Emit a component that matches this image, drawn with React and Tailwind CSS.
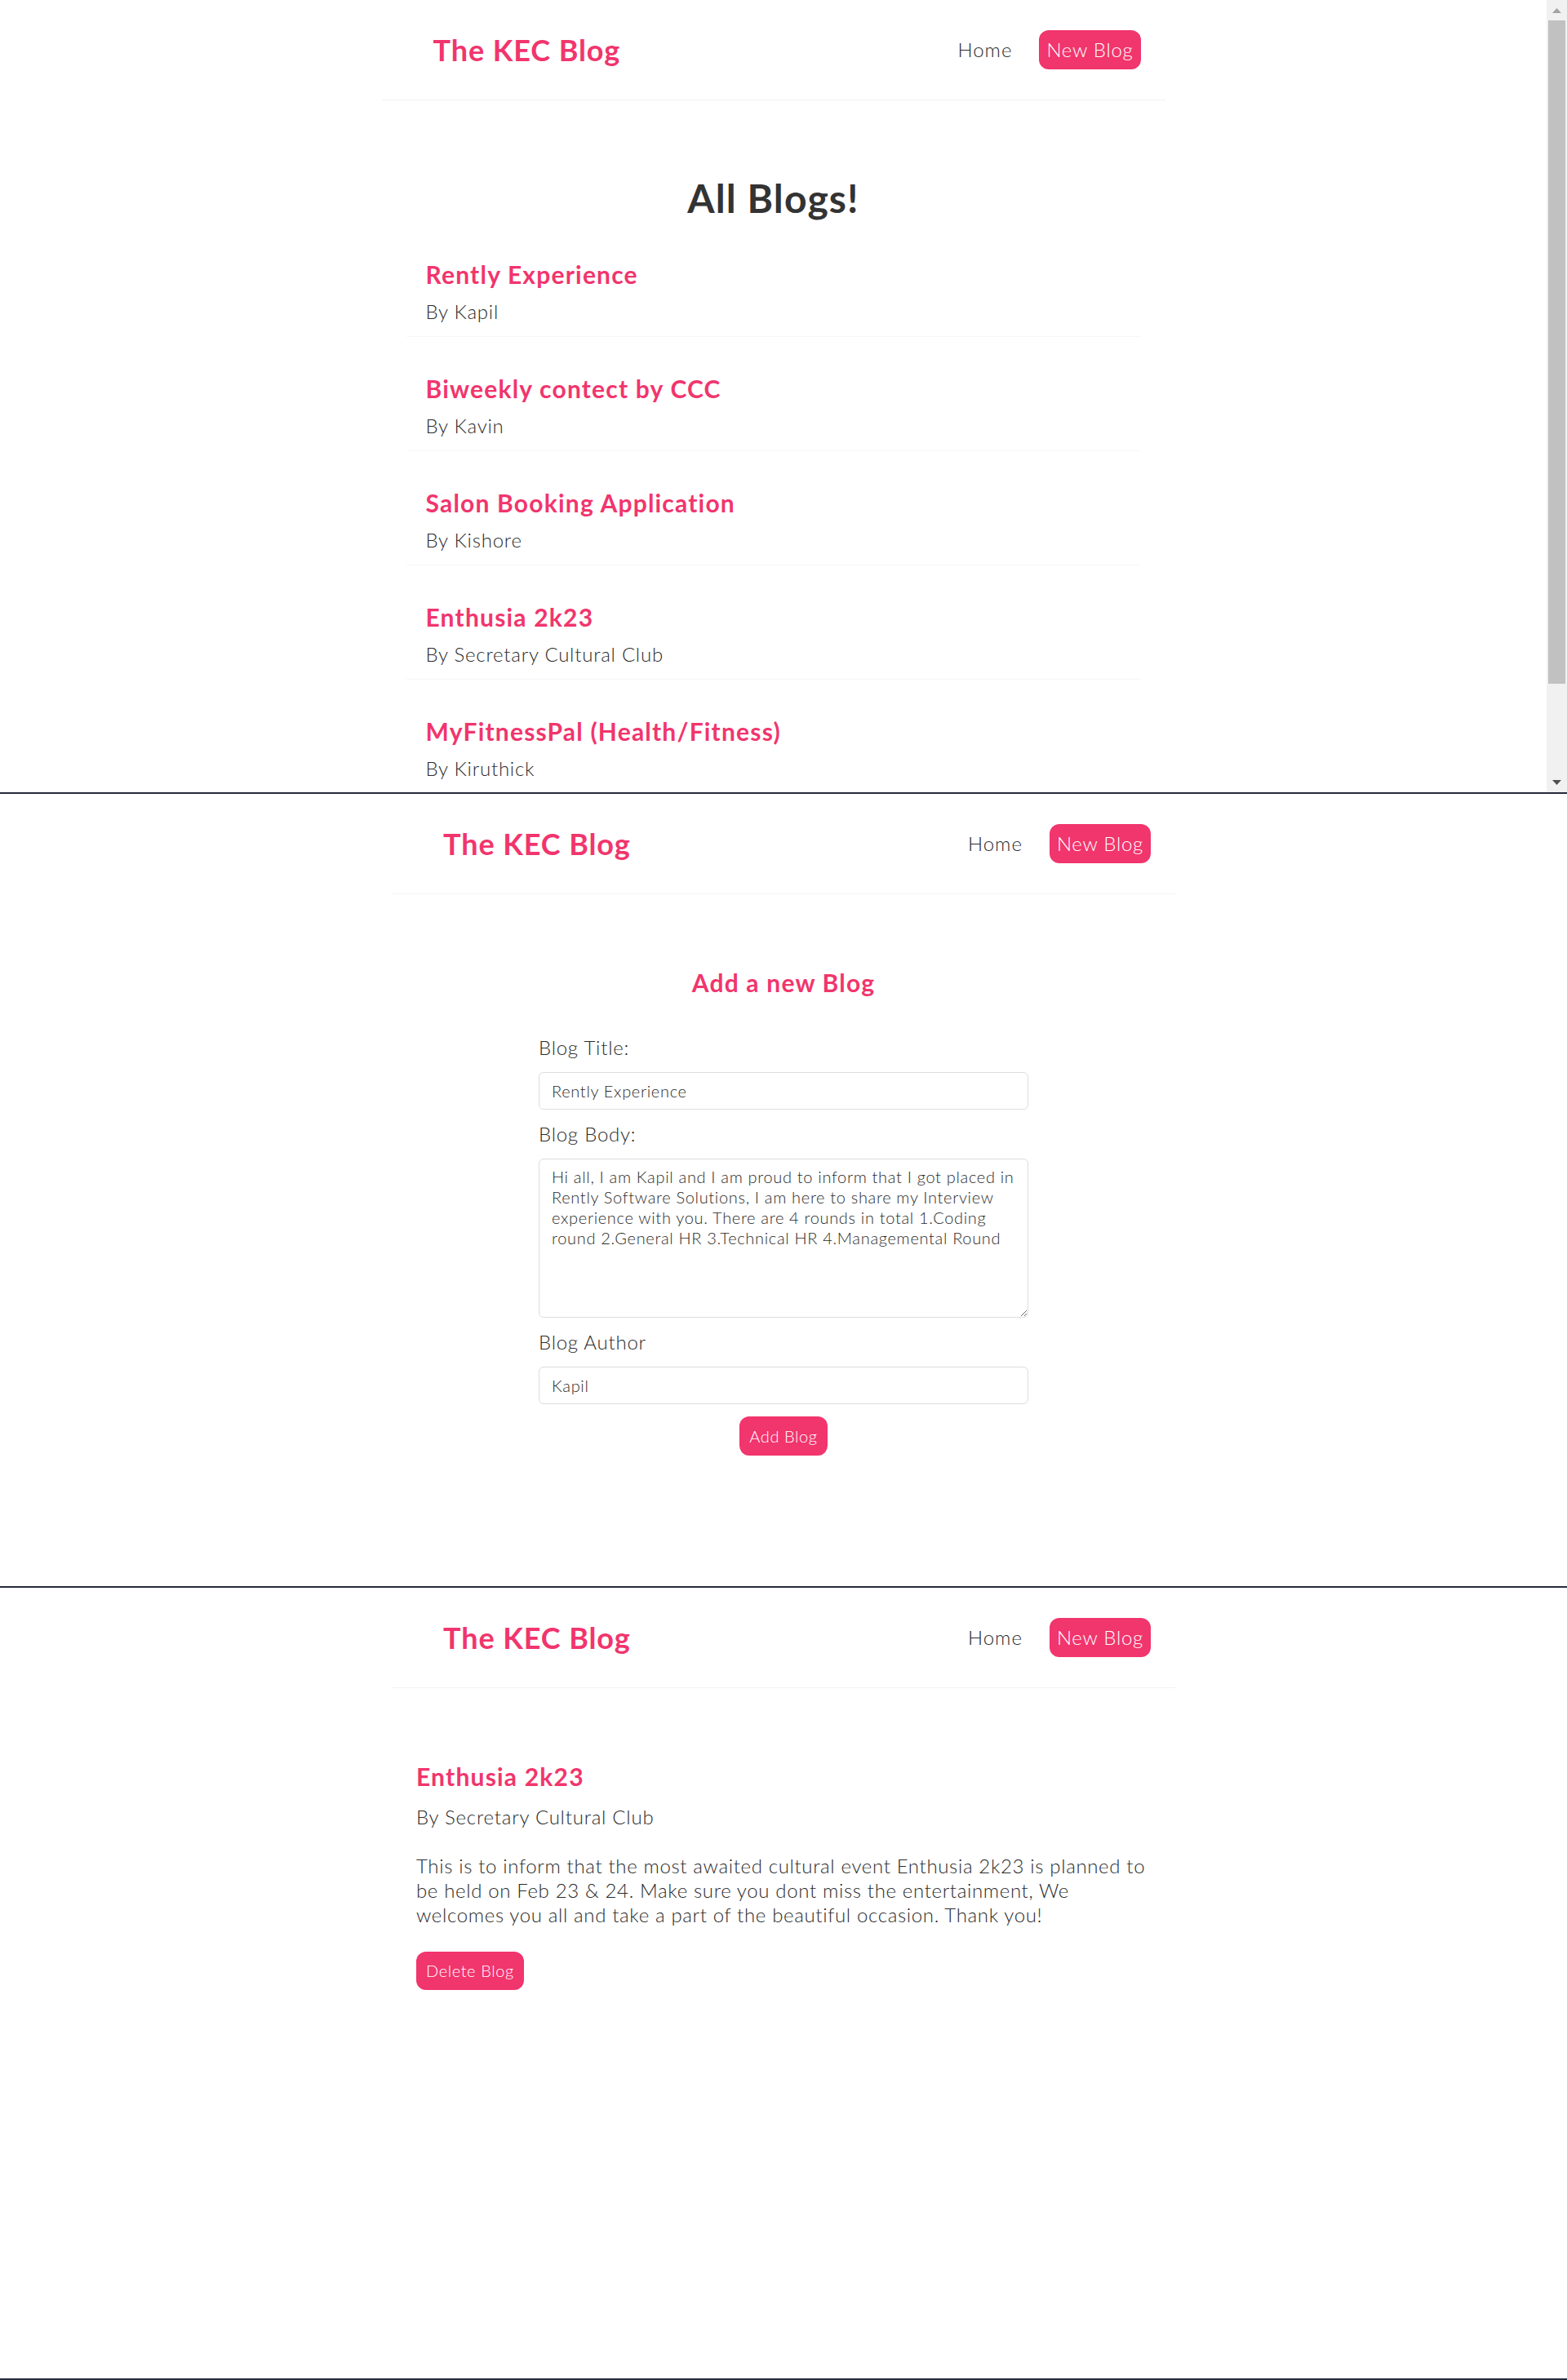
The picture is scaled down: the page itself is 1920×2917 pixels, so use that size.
import React from "react";

const blogs = [
  { title: "Rently Experience", author: "Kapil" },
  { title: "Biweekly contect by CCC", author: "Kavin" },
  { title: "Salon Booking Application", author: "Kishore" },
  { title: "Enthusia 2k23", author: "Secretary Cultural Club" },
  { title: "MyFitnessPal (Health/Fitness)", author: "Kiruthick" },
];

function Navbar() {
  return (
    <nav className="mx-auto box-border flex h-[123px] w-[960px] items-center border-b border-[#f2f2f2] px-[30px]">
      <h1 className="ml-[33px] text-[36px] leading-[45px] font-bold tracking-[0.025em] text-[#f1356d]">The KEC Blog</h1>
      <div className="ml-auto flex items-center">
        <a href="#" className="ml-[24px] p-[9px] text-[24px] leading-[30px] font-light tracking-[0.04em] text-[#2b2b2b]">
          Home
        </a>
        <a href="#" className="ml-[24px] rounded-[12px] bg-[#f1356d] p-[9px] text-[24px] leading-[30px] font-light tracking-[0.03em] text-white">
          New Blog
        </a>
      </div>
    </nav>
  );
}

function Scrollbar() {
  return (
    <div className="flex h-full w-[25px] shrink-0 flex-col bg-[#f1f1f1]">
      <div className="flex h-[25px] items-center justify-center">
        <svg width="11" height="6" viewBox="0 0 11 6">
          <polygon points="5.5,0 11,6 0,6" fill="#a3a3a3" />
        </svg>
      </div>
      <div className="ml-[2px] mr-[2px] h-[813px] bg-[#c1c1c1]" />
      <div className="flex-1" />
      <div className="flex h-[25px] items-center justify-center">
        <svg width="11" height="6" viewBox="0 0 11 6">
          <polygon points="0,0 11,0 5.5,6" fill="#505050" />
        </svg>
      </div>
    </div>
  );
}

function Divider() {
  return <div className="h-[2px] bg-[#262b3b]" />;
}

export default function App() {
  return (
    <div className="w-[1920px] bg-white font-['Lato',sans-serif] text-[#2b2b2b]">
      {/* Screen 1: all blogs */}
      <section className="flex h-[971px] overflow-hidden">
        <div className="min-w-0 flex-1">
          <Navbar />
          <div className="mx-auto mt-[60px] w-[960px] px-[30px] pt-[30px]">
            <h2 className="text-center text-[48px] leading-[60px] font-bold tracking-[0.023em] text-[#333]">All Blogs!</h2>
            {blogs.map((b) => (
              <div key={b.title} className="mt-[30px] border-b border-[#f7f7f7] px-[24px] py-[15px]">
                <h2 className="mb-[12px] text-[30px] leading-[37px] font-bold tracking-[0.04em] text-[#f1356d]">{b.title}</h2>
                <p className="text-[24px] leading-[30px] font-light tracking-[0.032em]">By {b.author}</p>
              </div>
            ))}
          </div>
        </div>
        <Scrollbar />
      </section>
      <Divider />

      {/* Screen 2: create */}
      <section className="h-[971px] overflow-hidden">
        <Navbar />
        <div className="mx-auto mt-[60px] w-[960px] px-[30px] pt-[30px]">
          <div className="mx-auto w-[600px] text-center">
            <h2 className="mb-[45px] text-[30px] leading-[37.5px] font-bold tracking-[0.04em] text-[#f1356d]">Add a new Blog</h2>
            <form>
              <label className="block text-left text-[24px] leading-[30px] font-light tracking-[0.032em]">Blog Title:</label>
              <input
                type="text"
                defaultValue="Rently Experience"
                className="my-[15px] box-border block w-full rounded-[6px] border border-[#ddd] px-[15px] py-[9px] text-[20px] leading-[26px] font-light tracking-[0.034em] text-[#2b2b2b]"
              />
              <label className="block text-left text-[24px] leading-[30px] font-light tracking-[0.032em]">Blog Body:</label>
              <textarea
                wrap="off"
                defaultValue={
                  "Hi all, I am Kapil and I am proud to inform that I got placed in\nRently Software Solutions, I am here to share my Interview\nexperience with you. There are 4 rounds in total 1.Coding\nround 2.General HR 3.Technical HR 4.Managemental Round"
                }
                className="my-[15px] box-border block h-[195px] w-full overflow-hidden rounded-[6px] border border-[#ddd] px-[15px] py-[9px] text-[20px] leading-[25px] font-light tracking-[0.034em] text-[#2b2b2b]"
              />
              <label className="block text-left text-[24px] leading-[30px] font-light tracking-[0.032em]">Blog Author</label>
              <input
                type="text"
                defaultValue="Kapil"
                className="my-[15px] box-border block w-full rounded-[6px] border border-[#ddd] px-[15px] py-[9px] text-[20px] leading-[26px] font-light tracking-[0.034em] text-[#2b2b2b]"
              />
              <button type="button" className="rounded-[12px] bg-[#f1356d] p-[12px] text-[20px] leading-[24px] font-light tracking-[0.03em] text-white">
                Add Blog
              </button>
            </form>
          </div>
        </div>
      </section>
      <Divider />

      {/* Screen 3: details */}
      <section className="h-[969px] overflow-hidden">
        <Navbar />
        <div className="mx-auto mt-[60px] w-[960px] px-[30px] pt-[30px]">
          <article>
            <h2 className="mb-[15px] text-[30px] leading-[37.5px] font-bold tracking-[0.04em] text-[#f1356d]">Enthusia 2k23</h2>
            <p className="text-[24px] leading-[30px] font-light tracking-[0.032em]">By Secretary Cultural Club</p>
            <div className="my-[30px] text-[24px] leading-[30px] font-light tracking-[0.027em]">
              <span className="block whitespace-nowrap">
                This is to inform that the most awaited cultural event Enthusia 2k23 is planned to
              </span>
              <span className="block whitespace-nowrap">
                be held on Feb 23 &amp; 24. Make sure you dont miss the entertainment, We
              </span>
              <span className="block whitespace-nowrap">
                welcomes you all and take a part of the beautiful occasion. Thank you!
              </span>
            </div>
            <button type="button" className="rounded-[12px] bg-[#f1356d] p-[12px] text-[20px] leading-[23px] font-light tracking-[0.03em] text-white">
              Delete Blog
            </button>
          </article>
        </div>
      </section>
      <Divider />
    </div>
  );
}
